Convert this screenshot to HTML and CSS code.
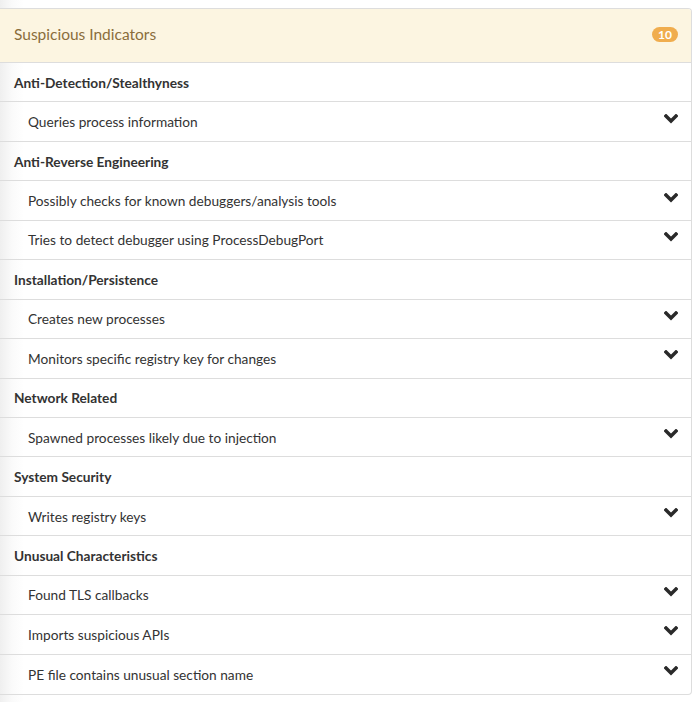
FILE: index.html
```html
<!DOCTYPE html>
<html>
<head>
<meta charset="utf-8">
<link rel="stylesheet" href="styles.css">
</head>
<body>
<div class="panel">
  <div class="panel-heading">
    <span class="title">Suspicious Indicators</span>
    <span class="badge">10</span>
  </div>
  <div class="cat">Anti-Detection/Stealthyness</div>
  <div class="item"><span>Queries process information</span><svg class="chev" viewBox="0 0 14 10"><polyline points="2,2 7,7 12,2"/></svg></div>
  <div class="cat">Anti-Reverse Engineering</div>
  <div class="item"><span>Possibly checks for known debuggers/analysis tools</span><svg class="chev" viewBox="0 0 14 10"><polyline points="2,2 7,7 12,2"/></svg></div>
  <div class="item"><span>Tries to detect debugger using ProcessDebugPort</span><svg class="chev" viewBox="0 0 14 10"><polyline points="2,2 7,7 12,2"/></svg></div>
  <div class="cat">Installation/Persistence</div>
  <div class="item"><span>Creates new processes</span><svg class="chev" viewBox="0 0 14 10"><polyline points="2,2 7,7 12,2"/></svg></div>
  <div class="item"><span>Monitors specific registry key for changes</span><svg class="chev" viewBox="0 0 14 10"><polyline points="2,2 7,7 12,2"/></svg></div>
  <div class="cat">Network Related</div>
  <div class="item"><span>Spawned processes likely due to injection</span><svg class="chev" viewBox="0 0 14 10"><polyline points="2,2 7,7 12,2"/></svg></div>
  <div class="cat">System Security</div>
  <div class="item"><span>Writes registry keys</span><svg class="chev" viewBox="0 0 14 10"><polyline points="2,2 7,7 12,2"/></svg></div>
  <div class="cat">Unusual Characteristics</div>
  <div class="item"><span>Found TLS callbacks</span><svg class="chev" viewBox="0 0 14 10"><polyline points="2,2 7,7 12,2"/></svg></div>
  <div class="item"><span>Imports suspicious APIs</span><svg class="chev" viewBox="0 0 14 10"><polyline points="2,2 7,7 12,2"/></svg></div>
  <div class="item last"><span>PE file contains unusual section name</span><svg class="chev" viewBox="0 0 14 10"><polyline points="2,2 7,7 12,2"/></svg></div>
</div>
</body>
</html>
```
FILE: styles.css
```css
html, body {
  margin: 0;
  padding: 0;
}
body {
  background: linear-gradient(to right, #efefef 0px, #fafafa 12px, #ffffff 24px);
  font-family: Lato, "Open Sans", sans-serif;
  color: #333;
  padding-top: 8px;
  min-height: 702px;
  box-sizing: border-box;
}
.panel {
  width: 692px;
  border: 1px solid #dddddd;
  border-left: none;
  border-radius: 0 4px 4px 0;
  box-sizing: border-box;
}
.panel-heading {
  display: flex;
  align-items: center;
  justify-content: space-between;
  height: 54px;
  padding: 0 13px 3px 14px;
  background: #fcf5e1;
  border-bottom: 1px solid #dddddd;
  border-radius: 0 3px 0 0;
  box-sizing: border-box;
}
.title {
  font-size: 15.5px;
  color: #8a6d3b;
}
.badge {
  background: #f0ad4e;
  color: #fff;
  font-size: 12px;
  font-weight: bold;
  line-height: 15px;
  padding: 0 6px;
  border-radius: 8px;
  margin-top: 1px;
}
.cat, .item {
  display: flex;
  align-items: center;
  justify-content: space-between;
  height: 39.44px;
  box-sizing: border-box;
  border-bottom: 1px solid #dddddd;
  font-size: 13.7px;
}
.cat {
  padding-left: 14px;
  font-weight: bold;
  color: #333;
}
.item {
  padding-left: 28px;
  padding-right: 13px;
  color: #333;
}
.item.last {
  border-bottom: none;
}
.chev {
  width: 14px;
  height: 10px;
  margin-top: -6px;
}
.chev polyline {
  fill: none;
  stroke: #2a2a2a;
  stroke-width: 3.4;
  stroke-linecap: square;
}
```
